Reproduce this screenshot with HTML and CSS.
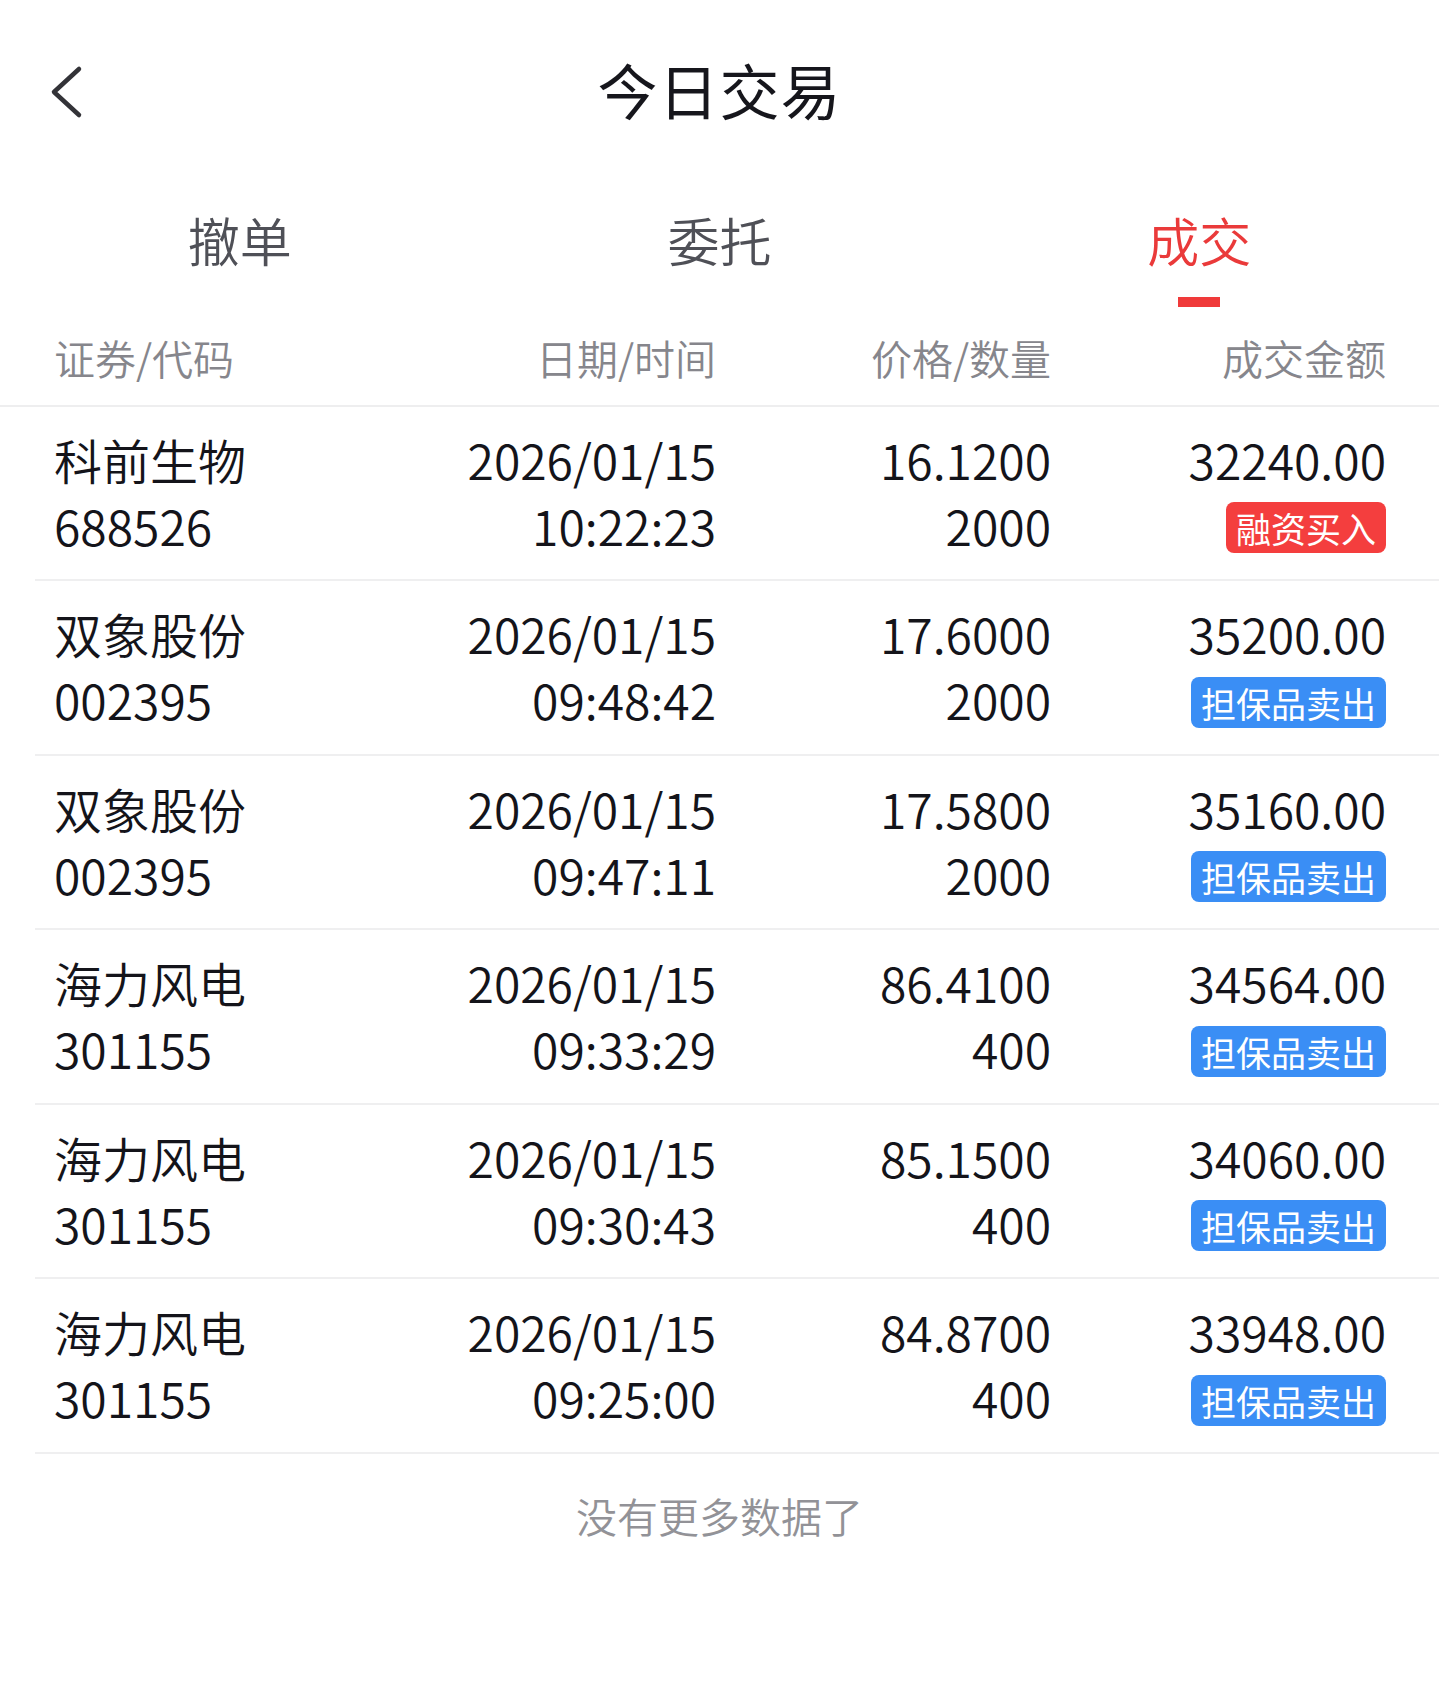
FILE: index.html
```html
<!DOCTYPE html>
<html lang="zh-CN">
<head>
<meta charset="utf-8">
<title>今日交易</title>
<link rel="stylesheet" href="styles.css">
</head>
<body>
<div class="page">
  <header class="topbar">
    <div class="back">
      <svg width="36" height="54" viewBox="0 0 36 54" aria-hidden="true">
        <path d="M31 4 L6 27 L31 50" fill="none" stroke="#333338" stroke-width="4.5" stroke-linecap="round" stroke-linejoin="round"/>
      </svg>
    </div>
    <h1 class="title">今日交易</h1>
    <div class="spacer"></div>
  </header>

  <nav class="tabs">
    <div class="tab">撤单</div>
    <div class="tab">委托</div>
    <div class="tab active">成交</div>
  </nav>

  <div class="thead">
    <div class="c1">证券/代码</div>
    <div class="c2">日期/时间</div>
    <div class="c3">价格/数量</div>
    <div class="c4">成交金额</div>
  </div>

  <div class="list">
    <div class="row">
      <div class="c1"><div>科前生物</div><div>688526</div></div>
      <div class="c2"><div>2026/01/15</div><div>10:22:23</div></div>
      <div class="c3"><div>16.1200</div><div>2000</div></div>
      <div class="c4"><div>32240.00</div><div><span class="badge buy">融资买入</span></div></div>
    </div>
    <div class="row">
      <div class="c1"><div>双象股份</div><div>002395</div></div>
      <div class="c2"><div>2026/01/15</div><div>09:48:42</div></div>
      <div class="c3"><div>17.6000</div><div>2000</div></div>
      <div class="c4"><div>35200.00</div><div><span class="badge sell">担保品卖出</span></div></div>
    </div>
    <div class="row">
      <div class="c1"><div>双象股份</div><div>002395</div></div>
      <div class="c2"><div>2026/01/15</div><div>09:47:11</div></div>
      <div class="c3"><div>17.5800</div><div>2000</div></div>
      <div class="c4"><div>35160.00</div><div><span class="badge sell">担保品卖出</span></div></div>
    </div>
    <div class="row">
      <div class="c1"><div>海力风电</div><div>301155</div></div>
      <div class="c2"><div>2026/01/15</div><div>09:33:29</div></div>
      <div class="c3"><div>86.4100</div><div>400</div></div>
      <div class="c4"><div>34564.00</div><div><span class="badge sell">担保品卖出</span></div></div>
    </div>
    <div class="row">
      <div class="c1"><div>海力风电</div><div>301155</div></div>
      <div class="c2"><div>2026/01/15</div><div>09:30:43</div></div>
      <div class="c3"><div>85.1500</div><div>400</div></div>
      <div class="c4"><div>34060.00</div><div><span class="badge sell">担保品卖出</span></div></div>
    </div>
    <div class="row">
      <div class="c1"><div>海力风电</div><div>301155</div></div>
      <div class="c2"><div>2026/01/15</div><div>09:25:00</div></div>
      <div class="c3"><div>84.8700</div><div>400</div></div>
      <div class="c4"><div>33948.00</div><div><span class="badge sell">担保品卖出</span></div></div>
    </div>
  </div>

  <div class="nomore">没有更多数据了</div>
</div>
</body>
</html>
```

FILE: styles.css
```css
* {
  box-sizing: border-box;
}

html, body {
  margin: 0;
  padding: 0;
  background: #ffffff;
}

body {
  font-family: "Noto Sans CJK SC", "Noto Sans", sans-serif;
  color: #1b1b22;
}

.page {
  width: 1439px;
  min-height: 1693px;
  background: #ffffff;
}

/* top bar */
.topbar {
  height: 184px;
  display: grid;
  grid-template-columns: 1fr auto 1fr;
  align-items: center;
  padding: 0 48px;
}

.back {
  display: flex;
  align-items: center;
  height: 54px;
}

.back svg {
  display: block;
}

.title {
  margin: 0;
  font-size: 60px;
  font-weight: 400;
  line-height: 80px;
  color: #16161c;
  letter-spacing: 1px;
  position: relative;
  top: -3px;
}

/* tabs */
.tabs {
  display: grid;
  grid-template-columns: repeat(3, 1fr);
}

.tab {
  display: flex;
  flex-direction: column;
  align-items: center;
  padding-top: 26px;
  font-size: 52px;
  font-weight: 350;
  line-height: 60px;
  color: #4f5057;
}

.tab::after {
  content: "";
  display: block;
  width: 42px;
  height: 10px;
  margin-top: 27px;
  background: transparent;
}

.tab.active {
  color: #ea3a3a;
}

.tab.active::after {
  background: #f03a3a;
}

/* table header */
.thead {
  display: grid;
  grid-template-columns: 331px 331px 335px 335px;
  padding: 22px 53px 20px 54px;
  font-size: 41px;
  line-height: 56px;
  font-weight: 350;
  color: #86868c;
  border-bottom: 2px solid #eeeeef;
}

.thead .c2,
.thead .c3,
.thead .c4 {
  text-align: right;
}

/* rows */
.row {
  display: grid;
  grid-template-columns: 331px 331px 335px 335px;
  margin-left: 35px;
  padding: 19px 53px 21px 19px;
  border-bottom: 2px solid #efeff0;
  font-size: 48px;
  font-weight: 350;
  line-height: 66px;
  color: #14141a;
}

.row .c2,
.row .c3,
.row .c4 {
  text-align: right;
}

.badge {
  display: inline-block;
  vertical-align: middle;
  height: 51px;
  line-height: 51px;
  padding: 0 10px;
  border-radius: 8px;
  font-size: 35px;
  font-weight: 400;
  color: #ffffff;
  position: relative;
  top: -5px;
}

.badge.buy {
  background: #f43e3e;
}

.badge.sell {
  background: #3a8ef5;
}

.nomore {
  text-align: center;
  font-size: 41px;
  line-height: 56px;
  font-weight: 350;
  color: #929297;
  padding-top: 33px;
}
```
